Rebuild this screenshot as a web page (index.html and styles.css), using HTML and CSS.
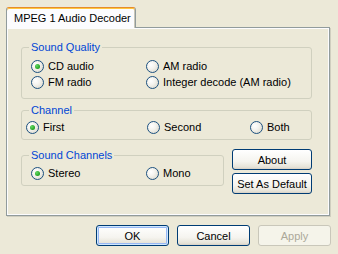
FILE: index.html
```html
<!DOCTYPE html>
<html>
<head>
<meta charset="utf-8">
<link rel="stylesheet" href="styles.css">
</head>
<body>
<div class="dialog">
  <div class="tabs"><div class="tab">MPEG 1 Audio Decoder</div></div>
  <div class="panel">
    <div class="group quality">
      <span class="legend">Sound Quality</span>
      <div class="grid two">
        <div class="opt"><span class="radio on"></span>CD audio</div>
        <div class="opt"><span class="radio"></span>AM radio</div>
        <div class="opt"><span class="radio"></span>FM radio</div>
        <div class="opt"><span class="radio"></span>Integer decode (AM radio)</div>
      </div>
    </div>
    <div class="group channel">
      <span class="legend">Channel</span>
      <div class="grid three">
        <div class="opt"><span class="radio on"></span>First</div>
        <div class="opt"><span class="radio"></span>Second</div>
        <div class="opt"><span class="radio"></span>Both</div>
      </div>
    </div>
    <div class="lower">
      <div class="group chans">
        <span class="legend">Sound Channels</span>
        <div class="grid two">
          <div class="opt"><span class="radio on"></span>Stereo</div>
          <div class="opt"><span class="radio"></span>Mono</div>
        </div>
      </div>
      <div class="side">
        <button class="btn">About</button>
        <button class="btn">Set As Default</button>
      </div>
    </div>
  </div>
  <div class="actions">
    <button class="btn act default">OK</button>
    <button class="btn act">Cancel</button>
    <button class="btn act disabled">Apply</button>
  </div>
</div>
</body>
</html>
```
FILE: styles.css
```css
html, body {
  margin: 0;
  padding: 0;
  background: #ECE9D8;
}
body {
  width: 338px;
  height: 254px;
  overflow: hidden;
  font-family: "Liberation Sans", Arial, sans-serif;
  font-size: 11px;
  color: #000;
}
.dialog {
  display: flex;
  flex-direction: column;
}
.tabs {
  display: flex;
  padding: 7px 0 0 6px;
}
.tab {
  position: relative;
  z-index: 1;
  box-sizing: border-box;
  width: 130px;
  height: 21px;
  padding: 3px 0 0 7px;
  line-height: 14px;
  background: #FCFCFE;
  border-top: 1px solid #E68B2C;
  border-left: 1px solid #919B9C;
  border-right: 1px solid #919B9C;
  border-radius: 3px 3px 0 0;
  box-shadow: inset 0 1px 0 #FFC73C, inset -1px 0 0 #C9C7BA;
}
.panel {
  box-sizing: border-box;
  margin: -1px 8px 0 6px;
  height: 189px;
  padding: 19px 17px 0 14px;
  border: 1px solid #919B9C;
  background: #ECE9D8;
  box-shadow: inset 1px 1px 0 #FCFCFE, inset -1px -1px 0 #FCFCFE, 1px 1px 0 #D0CEBF;
  display: flex;
  flex-direction: column;
}
.group {
  position: relative;
  box-sizing: border-box;
  border: 1px solid #D0D0BF;
  border-radius: 3px;
}
.legend {
  position: absolute;
  top: -7px;
  left: 7px;
  padding: 0 2px;
  line-height: 13px;
  color: #0046D5;
  background: #ECE9D8;
}
.quality {
  height: 52px;
  padding: 10px 0 0 9px;
}
.channel {
  margin-top: 11px;
  height: 30px;
  padding: 8px 0 0 4px;
}
.lower {
  margin-top: 9px;
  display: flex;
  gap: 8px;
}
.chans {
  margin-top: 6px;
  width: 204px;
  height: 31px;
  padding: 9px 0 0 9px;
}
.grid {
  display: grid;
  grid-auto-rows: 16px;
}
.two {
  grid-template-columns: 115px auto;
}
.three {
  grid-template-columns: 121px 103px auto;
}
.opt {
  display: flex;
  align-items: center;
  gap: 4px;
  line-height: 13px;
  white-space: nowrap;
}
.radio {
  box-sizing: border-box;
  width: 13px;
  height: 13px;
  flex: none;
  border-radius: 50%;
  border: 1px solid #1C5180;
  background: linear-gradient(135deg, #DCD9CD 0%, #F6F5F0 45%, #FFFFFF 100%);
  background: radial-gradient(circle at 35% 35%, #FFFFFF 0%, #F4F3EE 40%, #D5D2C4 100%);
  display: flex;
  align-items: center;
  justify-content: center;
}
.radio.on::after {
  content: "";
  width: 5px;
  height: 5px;
  border-radius: 50%;
  background: radial-gradient(circle at 35% 35%, #64D964 0%, #21A121 70%, #1A8A1A 100%);
}
.side {
  display: flex;
  flex-direction: column;
  gap: 3px;
}
.btn {
  box-sizing: border-box;
  width: 80px;
  height: 21px;
  margin: 0;
  padding: 0;
  font-family: "Liberation Sans", Arial, sans-serif;
  font-size: 11px;
  color: #000;
  border: 1px solid #003C74;
  border-radius: 3px;
  background: linear-gradient(#FFFFFF 0%, #F5F4EF 60%, #E6E3D8 90%, #D6D0C5 100%);
}
.actions {
  margin-top: 9px;
  display: flex;
  justify-content: flex-end;
  gap: 8px;
  padding-right: 7px;
}
.act {
  width: 73px;
}
.default {
  box-shadow: inset 0 0 0 1px #CEE7FF, inset 0 0 0 2px #98B8F4;
}
.disabled {
  color: #ACA899;
  border-color: #C9C7BA;
  background: #F5F4EA;
}
```
